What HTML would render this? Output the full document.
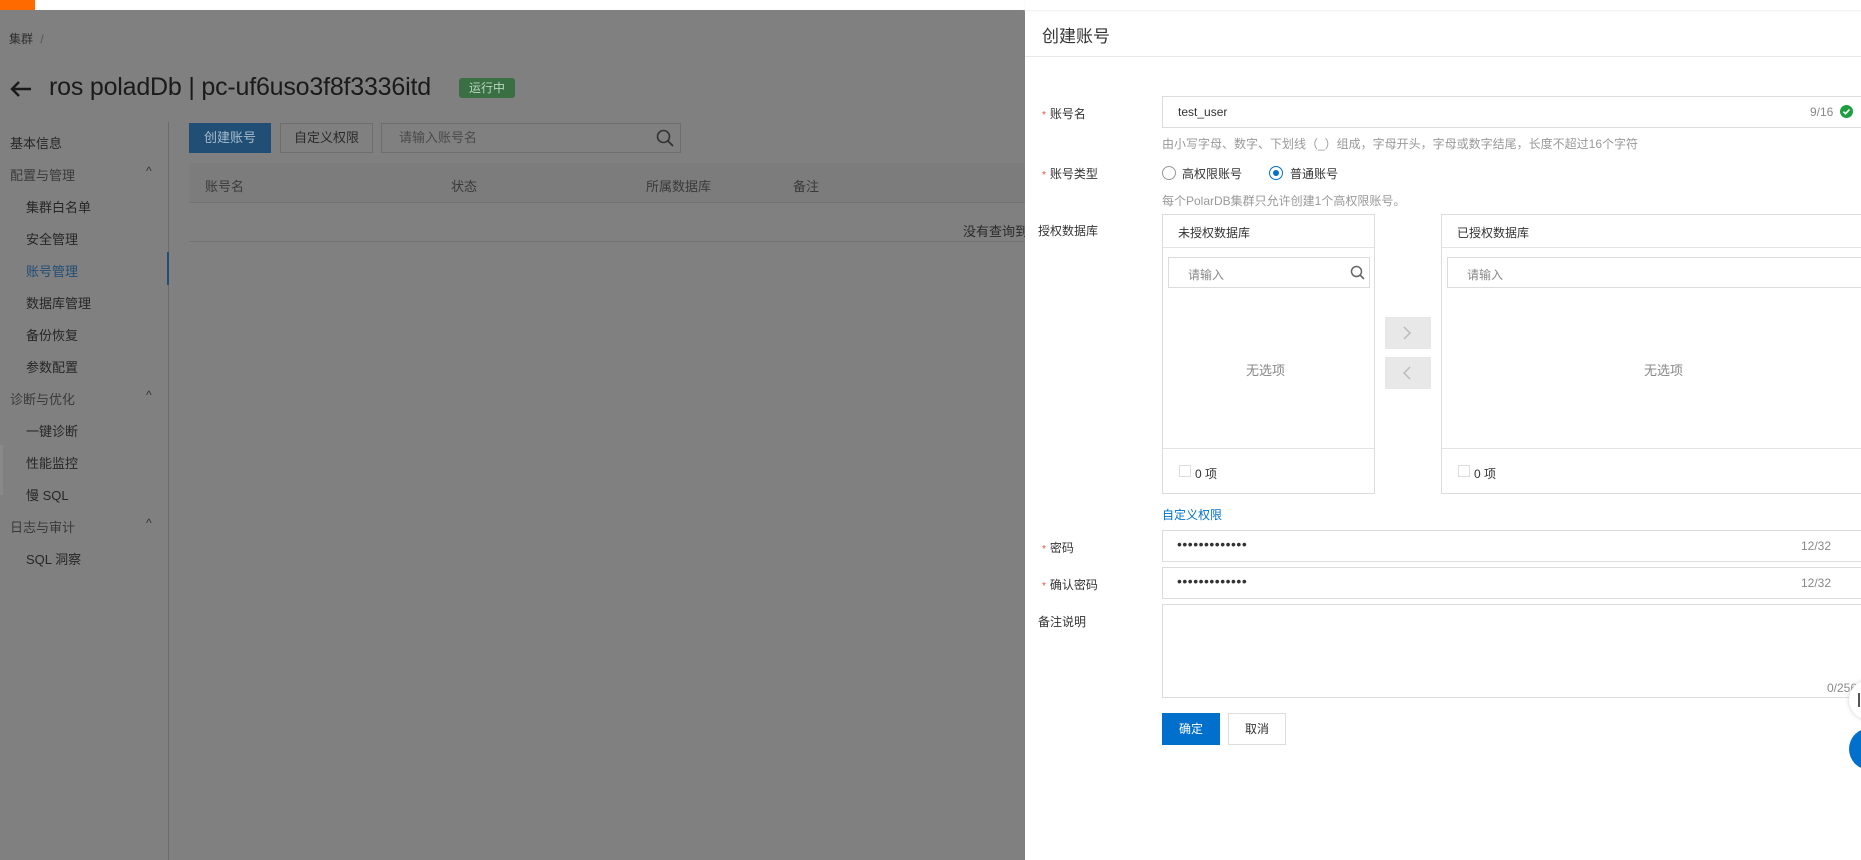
<!DOCTYPE html>
<html><head><meta charset="utf-8">
<style>
*{margin:0;padding:0;box-sizing:border-box}
body{width:1861px;height:860px;overflow:hidden;background:#808080;font-family:"Liberation Sans","Noto Sans CJK SC",sans-serif;font-size:12px;color:#222;position:relative}
.a{position:absolute;white-space:nowrap}
.nav{font-size:13px;color:#262626}
.grp{color:#3a3a3a}
.panel{position:absolute;left:1025px;top:0;width:836px;height:860px;background:#fff}
.p{position:absolute;white-space:nowrap}
.lbl{font-size:12px;color:#333}
.star{color:#e84c3d;margin-right:4px;font-size:10px}
.inp{position:absolute;border:1px solid #dcdcdc;background:#fff}
.gray{color:#999}
.dots{font-size:14px;letter-spacing:0.5px;color:#333}
</style></head><body>
<div class="a" style="left:0;top:0;width:1861px;height:10px;background:#fff"></div>
<div class="a" style="left:0;top:0;width:35px;height:10px;background:#ff6a00"></div>

<div class="a" style="left:9px;top:30px;font-size:12px;color:#2e2e2e">集群 <span style="color:#555;margin-left:4px">/</span></div>
<svg class="a" style="left:9px;top:80px" width="24" height="18" viewBox="0 0 24 18"><path d="M22 9H3M10 2L3 9l7 7" stroke="#1a1a1a" stroke-width="2.4" fill="none"/></svg>
<div class="a" style="left:49px;top:73px;font-size:25px;color:#1a1a1a;letter-spacing:-0.2px">ros poladDb | pc-uf6uso3f8f3336itd</div>
<div class="a" style="left:459px;top:78px;width:56px;height:20px;background:#3a6e43;border-radius:3px;color:#b9d6bd;font-size:12px;text-align:center;line-height:20px">运行中</div>

<div class="a" style="left:168px;top:122px;width:1px;height:738px;background:#6c6c6c"></div>
<div class="a" style="left:167px;top:252px;width:2px;height:33px;background:#214e74"></div>
<div class="a" style="left:0;top:445px;width:3px;height:50px;background:#888"></div>
<div class="a nav" style="left:10px;top:133px">基本信息</div>
<div class="a nav grp" style="left:10px;top:165px">配置与管理</div><div class="a" style="left:146px;top:164px;color:#333">^</div>
<div class="a nav" style="left:26px;top:197px">集群白名单</div>
<div class="a nav" style="left:26px;top:229px">安全管理</div>
<div class="a nav" style="left:26px;top:261px;color:#214e74">账号管理</div>
<div class="a nav" style="left:26px;top:293px">数据库管理</div>
<div class="a nav" style="left:26px;top:325px">备份恢复</div>
<div class="a nav" style="left:26px;top:357px">参数配置</div>
<div class="a nav grp" style="left:10px;top:389px">诊断与优化</div><div class="a" style="left:146px;top:388px;color:#333">^</div>
<div class="a nav" style="left:26px;top:421px">一键诊断</div>
<div class="a nav" style="left:26px;top:453px">性能监控</div>
<div class="a nav" style="left:26px;top:485px">慢 SQL</div>
<div class="a nav grp" style="left:10px;top:517px">日志与审计</div><div class="a" style="left:146px;top:516px;color:#333">^</div>
<div class="a nav" style="left:26px;top:549px">SQL 洞察</div>

<div class="a" style="left:189px;top:123px;width:82px;height:30px;background:#214e74;color:#a8bccf;font-size:13px;text-align:center;line-height:30px">创建账号</div>
<div class="a" style="left:280px;top:123px;width:93px;height:30px;border:1px solid #6e6e6e;color:#2a2a2a;font-size:13px;text-align:center;line-height:28px">自定义权限</div>
<div class="a" style="left:381px;top:123px;width:300px;height:30px;border:1px solid #6e6e6e;color:#4a4a4a;font-size:13px;line-height:28px;padding-left:17px">请输入账号名</div>
<svg class="a" style="left:656px;top:129px" width="18" height="18" viewBox="0 0 18 18"><circle cx="7.5" cy="7.5" r="6" stroke="#333" stroke-width="1.6" fill="none"/><path d="M12 12l5 5" stroke="#333" stroke-width="1.8"/></svg>
<div class="a" style="left:189px;top:163px;width:836px;height:40px;background:#7c7c7c;border-bottom:1px solid #727272"></div>
<div class="a" style="left:205px;top:176px;font-size:13px;color:#3a3a3a">账号名</div>
<div class="a" style="left:451px;top:176px;font-size:13px;color:#3a3a3a">状态</div>
<div class="a" style="left:646px;top:176px;font-size:13px;color:#3a3a3a">所属数据库</div>
<div class="a" style="left:793px;top:176px;font-size:13px;color:#3a3a3a">备注</div>
<div class="a" style="left:963px;top:221px;font-size:13px;color:#2a2a2a">没有查询到</div>
<div class="a" style="left:189px;top:241px;width:836px;height:1px;background:#747474"></div>

<div class="panel">
 <div class="p" style="left:0;top:0;width:836px;height:10px;background:#fff;box-shadow:0 1px 2px #eee"></div>
 <div class="p" style="left:17px;top:22px;font-size:17px;color:#333">创建账号</div>
 <div class="p" style="left:0;top:56px;width:836px;height:1px;background:#e8e8e8"></div>

 <div class="p lbl" style="left:17px;top:105px"><span class="star">*</span>账号名</div>
 <div class="inp" style="left:137px;top:96px;width:720px;height:32px"></div>
 <div class="p" style="left:153px;top:105px;color:#333">test_user</div>
 <div class="p gray" style="left:785px;top:105px;color:#888">9/16</div>
 <svg class="p" style="left:815px;top:105px" width="13" height="13" viewBox="0 0 13 13"><circle cx="6.5" cy="6.5" r="6.5" fill="#1e9e3e"/><path d="M3.5 6.7l2 2 4-4.2" stroke="#fff" stroke-width="1.6" fill="none"/></svg>
 <div class="p" style="left:137px;top:135px;color:#999">由小写字母、数字、下划线（_）组成，字母开头，字母或数字结尾，长度不超过16个字符</div>

 <div class="p lbl" style="left:17px;top:165px"><span class="star">*</span>账号类型</div>
 <div class="p" style="left:137px;top:166px;width:14px;height:14px;border:1px solid #999;border-radius:50%"></div>
 <div class="p" style="left:157px;top:165px;color:#333">高权限账号</div>
 <div class="p" style="left:244px;top:166px;width:14px;height:14px;border:1px solid #0070cc;border-radius:50%"><div style="margin:3px;width:6px;height:6px;border-radius:50%;background:#0070cc"></div></div>
 <div class="p" style="left:265px;top:165px;color:#333">普通账号</div>
 <div class="p" style="left:137px;top:192px;color:#999">每个PolarDB集群只允许创建1个高权限账号。</div>

 <div class="p lbl" style="left:13px;top:222px">授权数据库</div>
 <div class="inp" style="left:137px;top:214px;width:213px;height:280px"></div>
 <div class="p" style="left:138px;top:247px;width:211px;height:1px;background:#e3e3e3"></div>
 <div class="p" style="left:153px;top:224px;color:#333">未授权数据库</div>
 <div class="inp" style="left:143px;top:257px;width:202px;height:31px"></div>
 <div class="p" style="left:163px;top:266px;color:#888">请输入</div>
 <svg class="p" style="left:325px;top:265px" width="15" height="15" viewBox="0 0 15 15"><circle cx="6.5" cy="6.5" r="5" stroke="#666" stroke-width="1.5" fill="none"/><path d="M10 10l4 4" stroke="#666" stroke-width="1.6"/></svg>
 <div class="p" style="left:221px;top:360px;font-size:13px;color:#888">无选项</div>
 <div class="p" style="left:138px;top:448px;width:211px;height:1px;background:#e3e3e3"></div>
 <div class="p" style="left:154px;top:465px;width:12px;height:12px;border:1px solid #ddd"></div>
 <div class="p" style="left:170px;top:465px;color:#333">0 项</div>

 <div class="p" style="left:360px;top:317px;width:46px;height:32px;background:#e8e8e8"></div>
 <svg class="p" style="left:377px;top:326px" width="10" height="14"><path d="M2 1l6 6-6 6" stroke="#bbb" stroke-width="1.5" fill="none"/></svg>
 <div class="p" style="left:360px;top:357px;width:46px;height:32px;background:#e8e8e8"></div>
 <svg class="p" style="left:377px;top:366px" width="10" height="14"><path d="M8 1L2 7l6 6" stroke="#bbb" stroke-width="1.5" fill="none"/></svg>

 <div class="inp" style="left:416px;top:214px;width:440px;height:280px"></div>
 <div class="p" style="left:417px;top:247px;width:430px;height:1px;background:#e3e3e3"></div>
 <div class="p" style="left:432px;top:224px;color:#333">已授权数据库</div>
 <div class="inp" style="left:422px;top:257px;width:430px;height:31px"></div>
 <div class="p" style="left:442px;top:266px;color:#888">请输入</div>
 <div class="p" style="left:619px;top:360px;font-size:13px;color:#888">无选项</div>
 <div class="p" style="left:417px;top:448px;width:430px;height:1px;background:#e3e3e3"></div>
 <div class="p" style="left:433px;top:465px;width:12px;height:12px;border:1px solid #ddd"></div>
 <div class="p" style="left:449px;top:465px;color:#333">0 项</div>

 <div class="p" style="left:137px;top:506px;color:#0070cc">自定义权限</div>

 <div class="p lbl" style="left:17px;top:539px"><span class="star">*</span>密码</div>
 <div class="inp" style="left:137px;top:530px;width:720px;height:32px"></div>
 <div class="p dots" style="left:152px;top:536px">•••••••••••••</div>
 <div class="p" style="left:776px;top:539px;color:#888">12/32</div>
 <div class="p lbl" style="left:17px;top:576px"><span class="star">*</span>确认密码</div>
 <div class="inp" style="left:137px;top:567px;width:720px;height:32px"></div>
 <div class="p dots" style="left:152px;top:573px">•••••••••••••</div>
 <div class="p" style="left:776px;top:576px;color:#888">12/32</div>
 <div class="p lbl" style="left:13px;top:613px">备注说明</div>
 <div class="inp" style="left:137px;top:604px;width:720px;height:94px"></div>
 <div class="p" style="left:802px;top:681px;color:#888">0/256</div>

 <div class="p" style="left:137px;top:713px;width:58px;height:32px;background:#0070cc;color:#fff;text-align:center;line-height:32px">确定</div>
 <div class="p" style="left:203px;top:713px;width:58px;height:32px;border:1px solid #ddd;color:#333;text-align:center;line-height:30px">取消</div>

 <div class="p" style="left:824px;top:680px;width:40px;height:40px;border-radius:50%;background:#fff;box-shadow:0 0 4px #ccc"></div>
 <div class="p" style="left:833px;top:693px;width:2px;height:14px;background:#555"></div>
 <div class="p" style="left:824px;top:728px;width:42px;height:42px;border-radius:50%;background:#0070cc"></div>
</div>
</body></html>
